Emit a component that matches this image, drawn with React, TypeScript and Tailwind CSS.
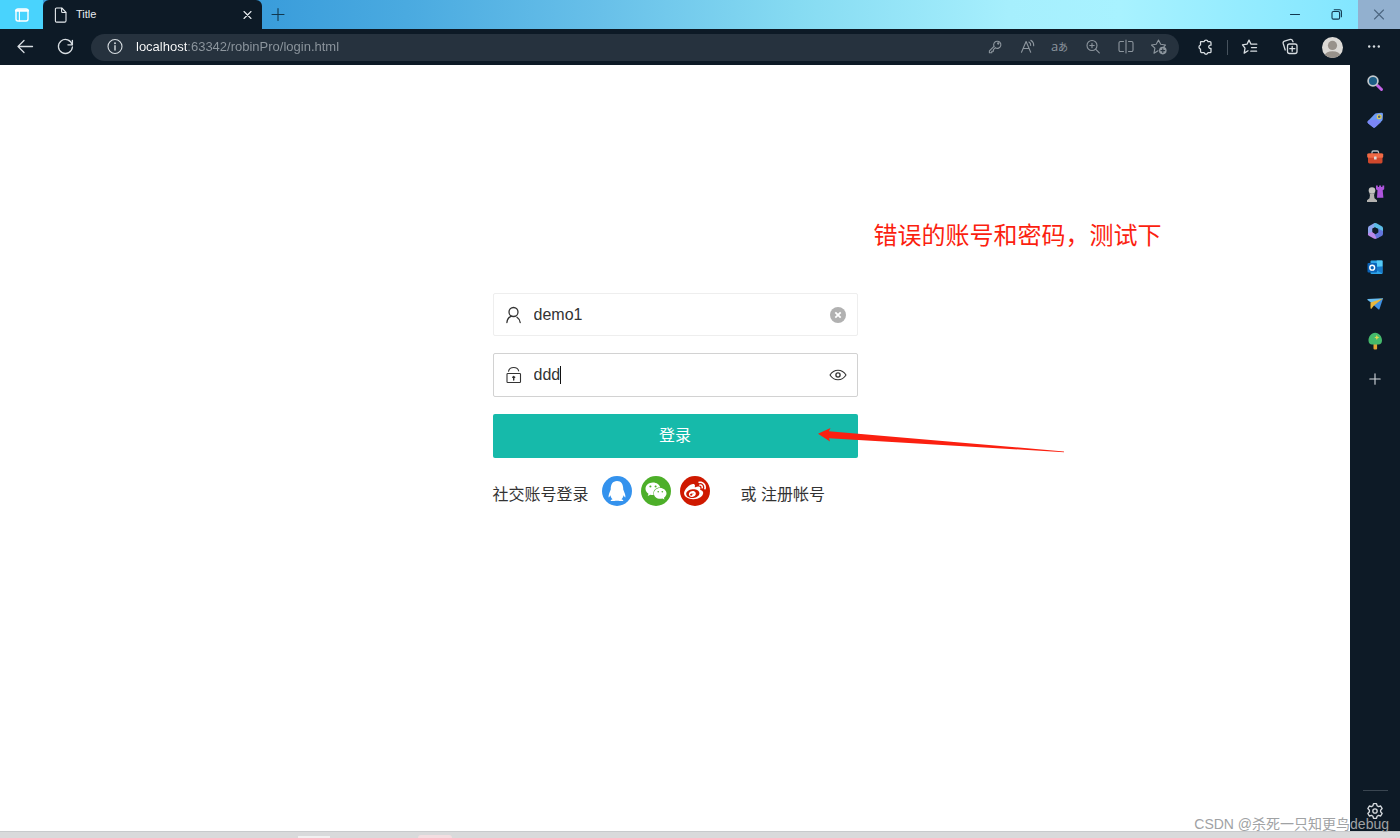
import { useState } from 'react'
import type { ReactNode } from 'react'
import { FaQq, FaWeibo, FaWeixin } from 'react-icons/fa'

type IconProps = { children: ReactNode; className?: string; box?: string }

// Line icon on a 20px grid, inherits the text colour
function Icon({ children, className = 'size-5', box = '0 0 20 20' }: IconProps) {
  return (
    <svg
      viewBox={box}
      className={className}
      fill="none"
      stroke="currentColor"
      strokeWidth="1.1"
      strokeLinecap="round"
      strokeLinejoin="round"
      aria-hidden="true"
    >
      {children}
    </svg>
  )
}

function TitleBar() {
  return (
    <div className="flex h-[29px] bg-[linear-gradient(90deg,#3a9ddb_19%,#4aaae0_29%,#68c0e9_43%,#86dbf2_57%,#a6effd_72%,#a8f2ff_80%,#82e6ff_97%)]">
      <button aria-label="Tab actions" className="flex w-[43px] items-center justify-center bg-[#49d3fd] text-white">
        <Icon>
          <rect x="4" y="4" width="12" height="12" rx="2" strokeWidth="1.4" />
          <path d="M4 5.7h12" strokeWidth="2.2" />
          <path d="M7.4 6v10" />
        </Icon>
      </button>
      <div className="flex w-[219px] items-center rounded-t-md bg-[#0d1a26] pl-2 pr-1 text-[#e8ecef]">
        <Icon>
          <path d="M5.600 3h5.200l4.200 4.300v8.400a1.400 1.400 0 0 1-1.400 1.400h-8a1.200 1.200 0 0 1-1.200-1.200V4.300A1.200 1.200 0 0 1 5.600 3z" />
          <path d="M10.600 3.200v3.300a1 1 0 0 0 1 1h3.200" />
        </Icon>
        <span className="ml-[5px] flex-1 text-[11px]">Title</span>
        <button aria-label="Close tab">
          <Icon><path d="M6 6.500l7 7M13 6.500l-7 7" /></Icon>
        </button>
      </div>
      <button aria-label="New tab" className="flex w-8 items-center justify-center text-[#12384f]">
        <Icon><path d="M10 3.500v12M4 9.500h12" /></Icon>
      </button>
      <div className="ml-auto flex text-[#12384f]">
        <button aria-label="Minimize" className="flex w-[42px] items-center justify-center">
          <Icon><path d="M5.500 9.500h9" /></Icon>
        </button>
        <button aria-label="Restore" className="flex w-[42px] items-center justify-center">
          <Icon>
            <rect x="5" y="6.500" width="7.600" height="7.600" rx="1.400" />
            <path d="M7.200 4.800h5.200a2 2 0 0 1 2 2v5" />
          </Icon>
        </button>
        <button aria-label="Close" className="flex w-[42px] items-center justify-center bg-[#92b0cf] text-[#4c6680]">
          <Icon><path d="M5.500 5l9 9M14.500 5l-9 9" /></Icon>
        </button>
      </div>
    </div>
  )
}

const addressActions = [
  {
    label: 'Password',
    icon: (
      <>
        <path d="M10 9.300L5.400 13.900v1.800h2.400v-1.500h1.600v-1.500l1.800-1.900" />
        <path d="M10 9.300a3.600 3.600 0 1 1 1.300 1.500" />
        <circle cx="14.200" cy="6.500" r=".6" />
      </>
    ),
  },
  {
    label: 'Read aloud',
    icon: (
      <>
        <path d="M4.500 15.300L9.100 4.500l4.600 10.800M6 11.500h6.200" />
        <path d="M11.900 5.100a3.400 3.400 0 0 1 1.800 3.400M13.800 3.300a6 6 0 0 1 2.900 5.400" />
      </>
    ),
  },
  { label: 'Translate', icon: null },
  {
    label: 'Zoom',
    icon: (
      <>
        <circle cx="9" cy="8.500" r="5" />
        <path d="M12.800 12.300l3.500 3.500M9 6.300v4.400M6.800 8.500h4.400" />
      </>
    ),
  },
  {
    label: 'Split screen',
    icon: (
      <>
        <path d="M7.500 4.500H4.400A1.400 1.400 0 0 0 3 5.900v7.200a1.400 1.400 0 0 0 1.400 1.400h3.100" />
        <path d="M12.500 4.500h3.100A1.400 1.400 0 0 1 17 5.900v7.200a1.400 1.400 0 0 1-1.400 1.400h-3.100" />
        <path d="M10 3v13" />
      </>
    ),
  },
  {
    label: 'Add to favorites',
    icon: (
      <>
        <path d="M9 13.800l-4 2.400.9-5L2.500 8l4.700-.7L9.500 3l2.200 4.300 4.800.7-1.500 1.500" />
        <circle cx="13.800" cy="13.600" r="3.800" fill="currentColor" stroke="none" />
        <path d="M13.800 11.700v3.800M11.900 13.600h3.800" stroke="#26323e" />
      </>
    ),
  },
]

function Toolbar() {
  const [url, setUrl] = useState('localhost:63342/robinPro/login.html')
  return (
    <div className="flex h-9 items-center bg-[#0d1a26] text-[#d7dde1]">
      <button aria-label="Back" className="ml-[15px]">
        <Icon><path d="M17.500 9.500H3M9 3.500L3 9.500l6 6" strokeWidth="1.300" /></Icon>
      </button>
      <button aria-label="Refresh" className="ml-5">
        <Icon>
          <path d="M17.200 7.700a7 7 0 1 0 .2 2.300" strokeWidth="1.300" />
          <path d="M17.400 3.300v4.500h-4.500" strokeWidth="1.300" />
        </Icon>
      </button>
      <div className="ml-4 flex h-[27px] flex-1 items-center rounded-full bg-[#26323e] pl-[14px] pr-1">
        <Icon>
          <circle cx="10" cy="9.500" r="7" />
          <path d="M10 8.800v4.200" strokeWidth="1.400" />
          <circle cx="10" cy="6.200" r=".4" />
        </Icon>
        <input
          aria-label="Address"
          value={url}
          onChange={(e) => setUrl(e.target.value)}
          className="ml-[11px] min-w-0 flex-1 bg-[linear-gradient(90deg,#ffffff_51px,#8e979f_51px)] bg-clip-text text-[13px] text-transparent outline-none"
        />
        <div className="flex text-[#8d969e]">
          {addressActions.map((a) => (
            <button key={a.label} aria-label={a.label} className="flex w-[33px] items-center justify-center">
              {a.icon ? (
                <Icon>{a.icon}</Icon>
              ) : (
                <span className="whitespace-nowrap pb-0.5 font-['Open_Sans','Noto_Sans_CJK_JP',sans-serif] text-[13px] leading-5">
                  a<span className="text-[10px]">あ</span>
                </span>
              )}
            </button>
          ))}
        </div>
      </div>
      <button aria-label="Extensions" className="ml-4">
        <Icon>
          <path
            strokeWidth="1.300"
            d="M6 4.700h3.100a2 2 0 0 1 3.900 0H15a1 1 0 0 1 1 1v2.500a1.700 1.700 0 1 0 0 3.200v3.300a1 1 0 0 1-1 1h-2a2 2 0 0 1-3.900 0H7a1.500 1.500 0 0 1-1.500-1.500v-2a2.200 2.200 0 0 1 0-4.200V5.200a.5.500 0 0 1 .5-.500z"
          />
        </Icon>
      </button>
      <span className="ml-3 h-[15px] w-px bg-[#46525d]" />
      <button aria-label="Favorites" className="ml-3">
        <Icon>
          <path strokeWidth="1.300" d="M8 13.800l-3.800 2.300.8-4.900L2.500 7.800l4.500-.6L9 3.100l2 4.100h5.800M11.500 10.600h5M10.800 14.200h5.800" />
        </Icon>
      </button>
      <button aria-label="Collections" className="ml-5">
        <Icon>
          <rect x="7.500" y="7" width="9.500" height="9.500" rx="2" strokeWidth="1.300" />
          <path strokeWidth="1.300" d="M12.200 9.300v5M9.800 11.700h5M5.200 13L3.200 6.500a2 2 0 0 1 1.300-2.400l5.700-1.700a2 2 0 0 1 2.400 1.300l.4 1.100" />
        </Icon>
      </button>
      <button aria-label="Profile" className="ml-[22px]">
        <svg viewBox="0 0 20 20" className="size-[21px]" aria-hidden="true">
          <clipPath id="face"><circle cx="10" cy="10" r="10" /></clipPath>
          <g clipPath="url(#face)">
            <rect width="20" height="20" fill="#dcdad6" />
            <circle cx="10" cy="8" r="4.400" fill="#98928b" />
            <ellipse cx="10" cy="18" rx="7.500" ry="4.500" fill="#98928b" />
          </g>
        </svg>
      </button>
      <button aria-label="Settings and more" className="ml-[21px] mr-4">
        <Icon>
          <g fill="currentColor" stroke="none">
            <circle cx="5.200" cy="9.500" r="1.200" />
            <circle cx="10" cy="9.500" r="1.200" />
            <circle cx="14.800" cy="9.500" r="1.200" />
          </g>
        </Icon>
      </button>
    </div>
  )
}

const sidebarApps = [
  {
    label: 'Search',
    icon: (
      <>
        <path d="M12.500 12.500l4 4" stroke="#c462e6" strokeWidth="3" strokeLinecap="round" />
        <circle cx="8" cy="8" r="4.900" fill="#1d5d85" stroke="#c3c9cd" strokeWidth="1.700" />
      </>
    ),
  },
  {
    label: 'Shopping',
    icon: (
      <>
        <path d="M3 11L9.500 4.200A3 3 0 0 1 11.500 3.200l5-.4A1.400 1.400 0 0 1 18 4.200l-.3 5a3 3 0 0 1-.9 1.900L10.500 17a2 2 0 0 1-2.800.1L3 13.200a1.500 1.500 0 0 1 0-2.200z" fill="#6f9bf4" />
        <path d="M3.500 10.500L11 9.500l5 2.500-5.500 5a2 2 0 0 1-2.800.1L3 13.200a1.500 1.500 0 0 1 0-2.200z" fill="#7a86f5" />
        <circle cx="14.200" cy="6.800" r="1.900" fill="#476480" stroke="#e5cf59" strokeWidth="1.200" />
      </>
    ),
  },
  {
    label: 'Tools',
    icon: (
      <>
        <path d="M7 7V5.300A1.300 1.300 0 0 1 8.300 4h3.900a1.300 1.300 0 0 1 1.300 1.300V7" fill="none" stroke="#b7bfc3" strokeWidth="1.300" />
        <rect x="3" y="6.500" width="14.500" height="10" rx="1.400" fill="#cf482c" />
        <rect x="2.200" y="6.500" width="16" height="4.200" rx="1" fill="#ef6a45" />
        <rect x="9" y="9.500" width="2.600" height="3" rx=".5" fill="#ddd" />
      </>
    ),
  },
  {
    label: 'Games',
    icon: (
      <>
        <path d="M11 1.500h1.800v1.400h1.300V1.500h2v1.400h1.300V1.500h1.800v3.800l-1.500 1 .7 7.500h-6.400l.5-7.500-1.500-1z" fill="#ad55dd" />
        <circle cx="7" cy="6.500" r="3.300" fill="#c4c4c1" />
        <path d="M4 9.400h6l-1 1.400.5 3.500 2.500 1.900V18H2v-1.800l2.500-1.900.5-3.500z" fill="#b3b2af" />
      </>
    ),
  },
  {
    label: 'Microsoft 365',
    icon: (
      <>
        <path d="M9.500 2L4.700 4.800A2.500 2.500 0 0 0 3 7v6.500L7.500 12.500V7.800l5.500-3z" fill="#8ea4ee" />
        <path d="M9.500 2.200a2 2 0 0 1 2 0l4.800 2.700A2.500 2.500 0 0 1 18 7v4.500L13.300 11V7.700L8.500 6z" fill="#5bbbe6" />
        <path d="M3 12.300l4.500-1.500 4 2.700 3 2.300-3 1.800a2.500 2.500 0 0 1-2.700 0l-4.600-2.500A2.200 2.200 0 0 1 3 12.300z" fill="#b988e8" />
        <path d="M13.300 7.700L18 10v3a2.500 2.500 0 0 1-1.300 2.100l-5 2.500-2.200-4.400 3.800-2.200z" fill="#6376dc" />
        <path d="M7.500 7.600l2.500-1.400 3.300 2.500v2.600l-2.800 2-3-2.100z" fill="#0d1a26" />
      </>
    ),
  },
  {
    label: 'Outlook',
    icon: (
      <>
        <rect x="5.500" y="2.500" width="12" height="13.500" rx="1" fill="#2ea4e8" />
        <path d="M11.700 2.500h5.800v6h-5.800z" fill="#55caf7" />
        <path d="M6 9.500l11.500 6v-7z" fill="#177ac9" />
        <rect x="2.500" y="5" width="9.500" height="9.500" rx="1" fill="#0b63b7" />
        <circle cx="7.200" cy="9.700" r="2.400" fill="none" stroke="#fff" strokeWidth="1.400" />
      </>
    ),
  },
  {
    label: 'Drop',
    icon: (
      <>
        <path d="M2.800 4L17.500 3.200a.6.600 0 0 1 .5.900L8 9 2.500 5a.6.600 0 0 1 .3-1z" fill="#66bdf2" />
        <path d="M18 3.600L8.500 10l4.800 4.300a.8.800 0 0 0 1.200-.3z" fill="#3f92e6" />
        <path d="M18 3.500L5.500 7.500v5.800a.6.600 0 0 0 1.100.3L9 10.500z" fill="#e9b83e" />
      </>
    ),
  },
  {
    label: 'Tree',
    icon: (
      <>
        <path d="M8.500 11h3.600v5.500a1 1 0 0 1-1 1H9.500a1 1 0 0 1-1-1z" fill="#e4a335" />
        <path d="M10.200 .8c-4 0-6.700 3.800-6.700 7.800 0 2.500 1.500 4 3.500 4h6.500c2 0 3.500-1.500 3.500-4 0-4-2.800-7.800-6.800-7.800z" fill="#45b96c" />
        <path d="M11.800 3l.8 1.700 1.700.8-1.700.8-.8 1.700-.8-1.700-1.700-.8 1.700-.8z" fill="#e3d74c" />
      </>
    ),
  },
]

function Sidebar() {
  return (
    <aside className="flex w-[50px] flex-col items-center bg-[#0d1a26] text-[#d5dade]">
      {sidebarApps.map((app) => (
        <button key={app.label} aria-label={app.label} className="flex h-[37px] w-full items-center justify-center pb-0.5">
          <svg viewBox="0 0 20 20" className="size-5" aria-hidden="true">{app.icon}</svg>
        </button>
      ))}
      <button aria-label="Customize" className="flex h-[37px] w-full items-center justify-center pb-0.5">
        <Icon><path d="M10 4.800v10.400M4.800 10h10.400" /></Icon>
      </button>
      <hr className="mt-auto w-[25px] border-[#3a4651]" />
      <button aria-label="Settings" className="flex h-10 w-full items-center justify-center">
        <Icon box="0 0 24 24">
          <g strokeWidth="1.600">
            <path d="M10.200 3.200h3.600l.7 2.500 1.700 1 2.600-.7 1.800 3.100-1.900 1.900v2l1.900 1.900-1.800 3.100-2.600-.7-1.700 1-.7 2.500h-3.600l-.7-2.500-1.700-1-2.600.7-1.800-3.100L5.300 13v-2L3.400 9.100 5.200 6l2.600.7 1.700-1z" />
            <circle cx="12" cy="12" r="2.600" />
          </g>
        </Icon>
      </button>
    </aside>
  )
}

function LoginForm() {
  const [user, setUser] = useState('demo1')
  const [password, setPassword] = useState('ddd')

  return (
    <form className="relative w-[365px] text-base text-[#333]" onSubmit={(e) => e.preventDefault()}>
      <div className="flex h-[43px] items-center rounded-xs border border-[#eee] pl-2 pr-[10px]">
        <label htmlFor="user" aria-label="账号">
          <Icon className="size-[22px]" box="0 0 22 22">
            <circle cx="11.500" cy="8" r="4.500" strokeWidth="1.300" />
            <path d="M9.300 12.200C6.800 13.200 5.200 15.500 4.900 18.500M15 13.200c2 1.300 3 3 3.200 5.300" strokeWidth="1.300" />
          </Icon>
        </label>
        <input
          id="user"
          value={user}
          onChange={(e) => setUser(e.target.value)}
          className="ml-[10px] min-w-0 flex-1 outline-none"
        />
        <button type="button" aria-label="清除" onClick={() => setUser('')}>
          <svg viewBox="0 0 18 18" className="size-[18px]" aria-hidden="true">
            <circle cx="9" cy="9" r="8" fill="#b1b1b1" />
            <path d="M6.300 6.300l5.400 5.400M11.700 6.300l-5.400 5.400" stroke="#fff" strokeWidth="1.800" />
          </svg>
        </button>
      </div>

      <div className="relative mt-[17px] flex h-11 items-center rounded-xs border border-[#d2d2d2] pl-2 pr-[10px]">
        <label htmlFor="password" aria-label="密码">
          <Icon className="size-[22px]" box="0 0 22 22">
            <rect x="5" y="9.500" width="13.500" height="9" rx=".8" />
            <path d="M6.500 7.300C7 5 9 3.500 11.700 3.500c2.500 0 4.500 1.300 5 3.500" />
            <path d="M11.700 12.500v3.500M10.700 13.200h2" strokeWidth="1.400" />
          </Icon>
        </label>
        <input
          id="password"
          value={password}
          onChange={(e) => setPassword(e.target.value)}
          className="ml-[10px] min-w-0 flex-1 outline-none"
        />
        {/* text cursor */}
        <span className="absolute left-[66px] h-[18px] w-px bg-[#111]" />
        <button type="button" aria-label="显示密码">
          <Icon className="size-[18px]" box="0 0 18 18">
            <path d="M1 9c2-3.200 4.800-4.800 8-4.800S15 5.800 17 9c-2 3.200-4.800 4.800-8 4.800S3 12.200 1 9z" />
            <circle cx="9" cy="9" r="2.100" strokeWidth="1.300" />
          </Icon>
        </button>
      </div>

      <button type="submit" className="mt-[17px] h-11 w-full rounded-xs bg-[#16baaa] text-white">
        登录
      </button>

      <div className="mt-[18px] flex items-start">
        <span className="mt-[7px]">社交账号登录</span>
        <div className="ml-[13px] flex gap-[9px] text-white">
          <a href="#qq" aria-label="QQ" className="flex size-[30px] items-center justify-center rounded-full bg-[#3492ed]">
            <FaQq className="size-5" />
          </a>
          <a href="#weixin" aria-label="微信" className="flex size-[30px] items-center justify-center rounded-full bg-[#4daf29]">
            <FaWeixin className="size-[22px]" />
          </a>
          <a href="#weibo" aria-label="微博" className="flex size-[30px] items-center justify-center rounded-full bg-[#cf1900]">
            <FaWeibo className="size-[22px]" />
          </a>
        </div>
        <span className="ml-[31px] mt-[7px]">
          或 <a href="#reg">注册帐号</a>
        </span>
      </div>

      {/* red notes over the page */}
      <p className="absolute -top-[73px] left-[381px] whitespace-nowrap text-2xl text-[#fb1f10]">
        错误的账号和密码，测试下
      </p>
      <svg
        viewBox="0 0 248 28"
        className="pointer-events-none absolute left-[325px] top-[134px] h-7 w-[248px]"
        fill="#fb2010"
        aria-hidden="true"
      >
        <path d="M0 6.800L12.500 1l-1.600 3.300L246 24.400v.8L11 11.200l1 3.200z" />
      </svg>
    </form>
  )
}

export default function App() {
  return (
    <div className="relative flex min-h-screen flex-col bg-white font-['Liberation_Sans','Noto_Sans_CJK_SC',sans-serif]">
      <header>
        <TitleBar />
        <Toolbar />
      </header>
      <div className="flex flex-1">
        <main className="flex flex-1 justify-center pt-57">
          <LoginForm />
        </main>
        <Sidebar />
      </div>
      {/* top edge of the taskbar */}
      <div className="flex h-[7px] items-end border-t border-[#c8cacc] bg-[#d9dadb]">
        <span className="ml-[298px] h-0.5 w-8 bg-[#f1f1f1]" />
        <span className="ml-[88px] h-[3px] w-[34px] rounded-t-sm bg-[#f3dee1]" />
      </div>
      <p className="absolute bottom-1 right-[11px] text-sm text-[#a0a2a4]">
        CSDN @杀死一只知更鸟debug
      </p>
    </div>
  )
}
